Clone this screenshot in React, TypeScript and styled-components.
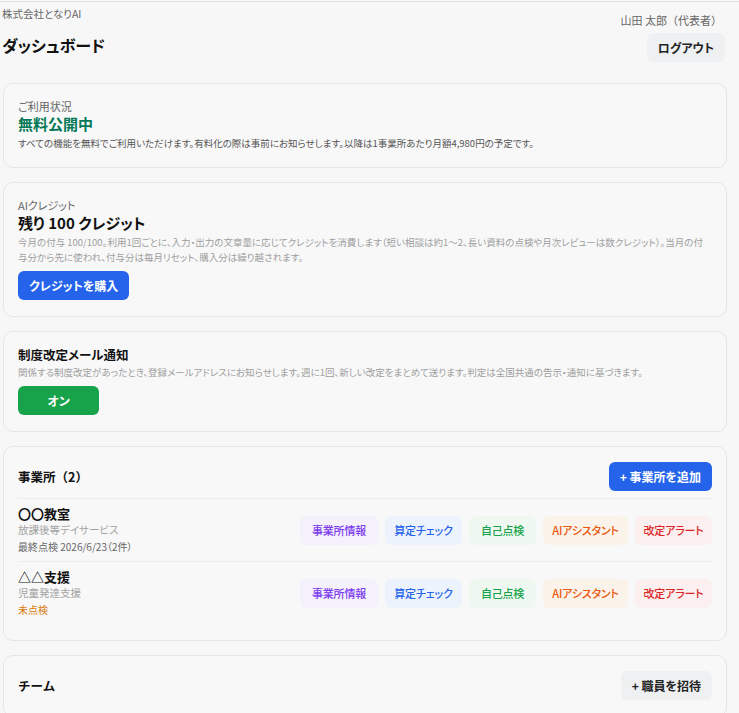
import * as React from "react";
import styled, { createGlobalStyle } from "styled-components";

const GlobalStyle = createGlobalStyle`
  html, body {
    margin: 0;
    padding: 0;
    background: #f7f7f7;
  }
  body {
    font-family: "Noto Sans CJK JP", "Noto Sans", sans-serif;
    font-feature-settings: "palt";
    color: #111;
  }
  * {
    box-sizing: border-box;
  }
`;

const Page = styled.div`
  margin-top: 1px;
  border-top: 1px solid #e3e3e3;
  padding: 0 12px 40px 3px;
`;

const Header = styled.header`
  display: flex;
  justify-content: space-between;
  align-items: flex-start;
  padding-top: 4px;
  margin-bottom: 21px;
`;

const HeaderLeft = styled.div`
  display: flex;
  flex-direction: column;
  margin-left: -1px;
`;

const Company = styled.div`
  font-size: 10.5px;
  line-height: 16px;
  color: #666;
`;

const PageTitle = styled.h1`
  margin: 10px 0 0;
  font-size: 16px;
  line-height: 26px;
  font-weight: 700;
  color: #111;
`;

const HeaderRight = styled.div`
  display: flex;
  flex-direction: column;
  align-items: flex-end;
  padding-right: 2px;
`;

const UserName = styled.div`
  margin-top: 6px;
  margin-right: 3px;
  font-size: 11px;
  line-height: 16px;
  color: #666;
  font-feature-settings: normal;
`;

const Cards = styled.div`
  display: flex;
  flex-direction: column;
  gap: 14px;
`;

const Card = styled.section`
  background: #f8f8f8;
  border: 1px solid #e6e6e6;
  border-radius: 10px;
  padding: 15px 14px 16px;
`;

const Label = styled.div`
  font-size: 11px;
  line-height: 14px;
  color: #666;
`;

const BigValue = styled.div<{ $tone?: "green" }>`
  font-size: 15px;
  line-height: 21px;
  font-weight: 700;
  color: ${(p) => (p.$tone === "green" ? "#047857" : "#111")};
`;

const CardTitle = styled.h2`
  margin: 0;
  font-size: 12.5px;
  line-height: 16px;
  font-weight: 700;
  color: #111;
`;

const Desc = styled.p<{ $muted?: boolean }>`
  margin: 2px 0 0;
  font-size: 9.5px;
  line-height: 15px;
  color: ${(p) => (p.$muted ? "#9e9e9e" : "#555")};
`;

const Button = styled.button<{ $variant: "blue" | "green" | "gray" }>`
  display: inline-flex;
  align-items: center;
  justify-content: center;
  height: 29px;
  padding: 0 11px;
  border: none;
  border-radius: 6px;
  font-family: inherit;
  font-feature-settings: "palt";
  font-size: 12px;
  font-weight: 700;
  cursor: pointer;
  background: ${(p) =>
    p.$variant === "blue" ? "#2563eb" : p.$variant === "green" ? "#16a34a" : "#eff0f2"};
  color: ${(p) => (p.$variant === "gray" ? "#222" : "#fff")};
`;

const WideButton = styled(Button)`
  width: 81px;
`;

const ActionRow = styled.div<{ $gap: number }>`
  margin-top: ${(p) => p.$gap}px;
`;

const SectionHead = styled.div<{ $divided?: boolean }>`
  display: flex;
  justify-content: space-between;
  align-items: center;
  padding-bottom: ${(p) => (p.$divided ? "7px" : "0")};
  border-bottom: ${(p) => (p.$divided ? "1px solid #ececec" : "none")};

  h2 {
    font-feature-settings: normal;
  }
`;

const OfficeRow = styled.div<{ $last?: boolean }>`
  display: flex;
  justify-content: space-between;
  align-items: center;
  padding: 6px 0;
  border-bottom: ${(p) => (p.$last ? "none" : "1px solid #ececec")};
`;

const OfficeInfo = styled.div`
  display: flex;
  flex-direction: column;
`;

const OfficeName = styled.div`
  font-size: 13px;
  line-height: 18px;
  font-weight: 700;
  color: #111;
`;

const OfficeType = styled.div`
  font-size: 10.5px;
  line-height: 14px;
  color: #a3a3a3;
`;

const OfficeStatus = styled.div<{ $pending?: boolean }>`
  margin-top: 2px;
  font-size: 10px;
  line-height: 16px;
  color: ${(p) => (p.$pending ? "#d97706" : "#666")};
`;

const Tags = styled.div`
  display: flex;
  gap: 7px;
`;

const tagColors = {
  purple: { fg: "#7c3aed", bg: "#f4f1fd" },
  blue: { fg: "#2563eb", bg: "#edf3fd" },
  green: { fg: "#16a34a", bg: "#eef8f0" },
  orange: { fg: "#ea580c", bg: "#fbf2ea" },
  red: { fg: "#dc2626", bg: "#fbefef" },
};

type TagTone = keyof typeof tagColors;

const Tag = styled.span<{ $tone: TagTone; $width: number }>`
  display: inline-flex;
  align-items: center;
  justify-content: center;
  width: ${(p) => p.$width}px;
  height: 29px;
  border-radius: 6px;
  font-size: 11px;
  font-weight: 500;
  white-space: nowrap;
  letter-spacing: -0.2px;
  background: ${(p) => tagColors[p.$tone].bg};
  color: ${(p) => tagColors[p.$tone].fg};
`;

const tags: { label: string; tone: TagTone; width: number }[] = [
  { label: "事業所情報", tone: "purple", width: 78 },
  { label: "算定チェック", tone: "blue", width: 77 },
  { label: "自己点検", tone: "green", width: 67 },
  { label: "AIアシスタント", tone: "orange", width: 85 },
  { label: "改定アラート", tone: "red", width: 77 },
];

const offices = [
  { name: "〇〇教室", type: "放課後等デイサービス", status: "最終点検 2026/6/23（2件）", pending: false },
  { name: "△△支援", type: "児童発達支援", status: "未点検", pending: true },
];

export default function App(): React.ReactElement {
  return (
    <>
      <GlobalStyle />
      <Page>
        <Header>
          <HeaderLeft>
            <Company>株式会社となりAI</Company>
            <PageTitle>ダッシュボード</PageTitle>
          </HeaderLeft>
          <HeaderRight>
            <UserName>山田 太郎（代表者）</UserName>
            <ActionRow $gap={5}>
              <Button $variant="gray">ログアウト</Button>
            </ActionRow>
          </HeaderRight>
        </Header>

        <Cards>
          <Card>
            <Label>ご利用状況</Label>
            <BigValue $tone="green">無料公開中</BigValue>
            <Desc>
              すべての機能を無料でご利用いただけます。有料化の際は事前にお知らせします。以降は1事業所あたり月額4,980円の予定です。
            </Desc>
          </Card>

          <Card>
            <Label>AIクレジット</Label>
            <BigValue>残り 100 クレジット</BigValue>
            <Desc $muted>
              今月の付与 100/100。利用1回ごとに、入力・出力の文章量に応じてクレジットを消費します（短い相談は約1〜2、長い資料の点検や月次レビューは数クレジット）。当月の付与分から先に使われ、付与分は毎月リセット、購入分は繰り越されます。
            </Desc>
            <ActionRow $gap={6}>
              <Button $variant="blue">クレジットを購入</Button>
            </ActionRow>
          </Card>

          <Card>
            <CardTitle>制度改定メール通知</CardTitle>
            <Desc $muted>
              関係する制度改定があったとき、登録メールアドレスにお知らせします。週に1回、新しい改定をまとめて送ります。判定は全国共通の告示・通知に基づきます。
            </Desc>
            <ActionRow $gap={6}>
              <WideButton $variant="green">オン</WideButton>
            </ActionRow>
          </Card>

          <Card>
            <SectionHead $divided>
              <CardTitle>事業所（2）</CardTitle>
              <Button $variant="blue">+ 事業所を追加</Button>
            </SectionHead>
            {offices.map((o, i) => (
              <OfficeRow key={o.name} $last={i === offices.length - 1}>
                <OfficeInfo>
                  <OfficeName>{o.name}</OfficeName>
                  <OfficeType>{o.type}</OfficeType>
                  <OfficeStatus $pending={o.pending}>{o.status}</OfficeStatus>
                </OfficeInfo>
                <Tags>
                  {tags.map((t) => (
                    <Tag key={t.label} $tone={t.tone} $width={t.width}>
                      {t.label}
                    </Tag>
                  ))}
                </Tags>
              </OfficeRow>
            ))}
          </Card>

          <Card>
            <SectionHead>
              <CardTitle>チーム</CardTitle>
              <Button $variant="gray">+ 職員を招待</Button>
            </SectionHead>
          </Card>
        </Cards>
      </Page>
    </>
  );
}
